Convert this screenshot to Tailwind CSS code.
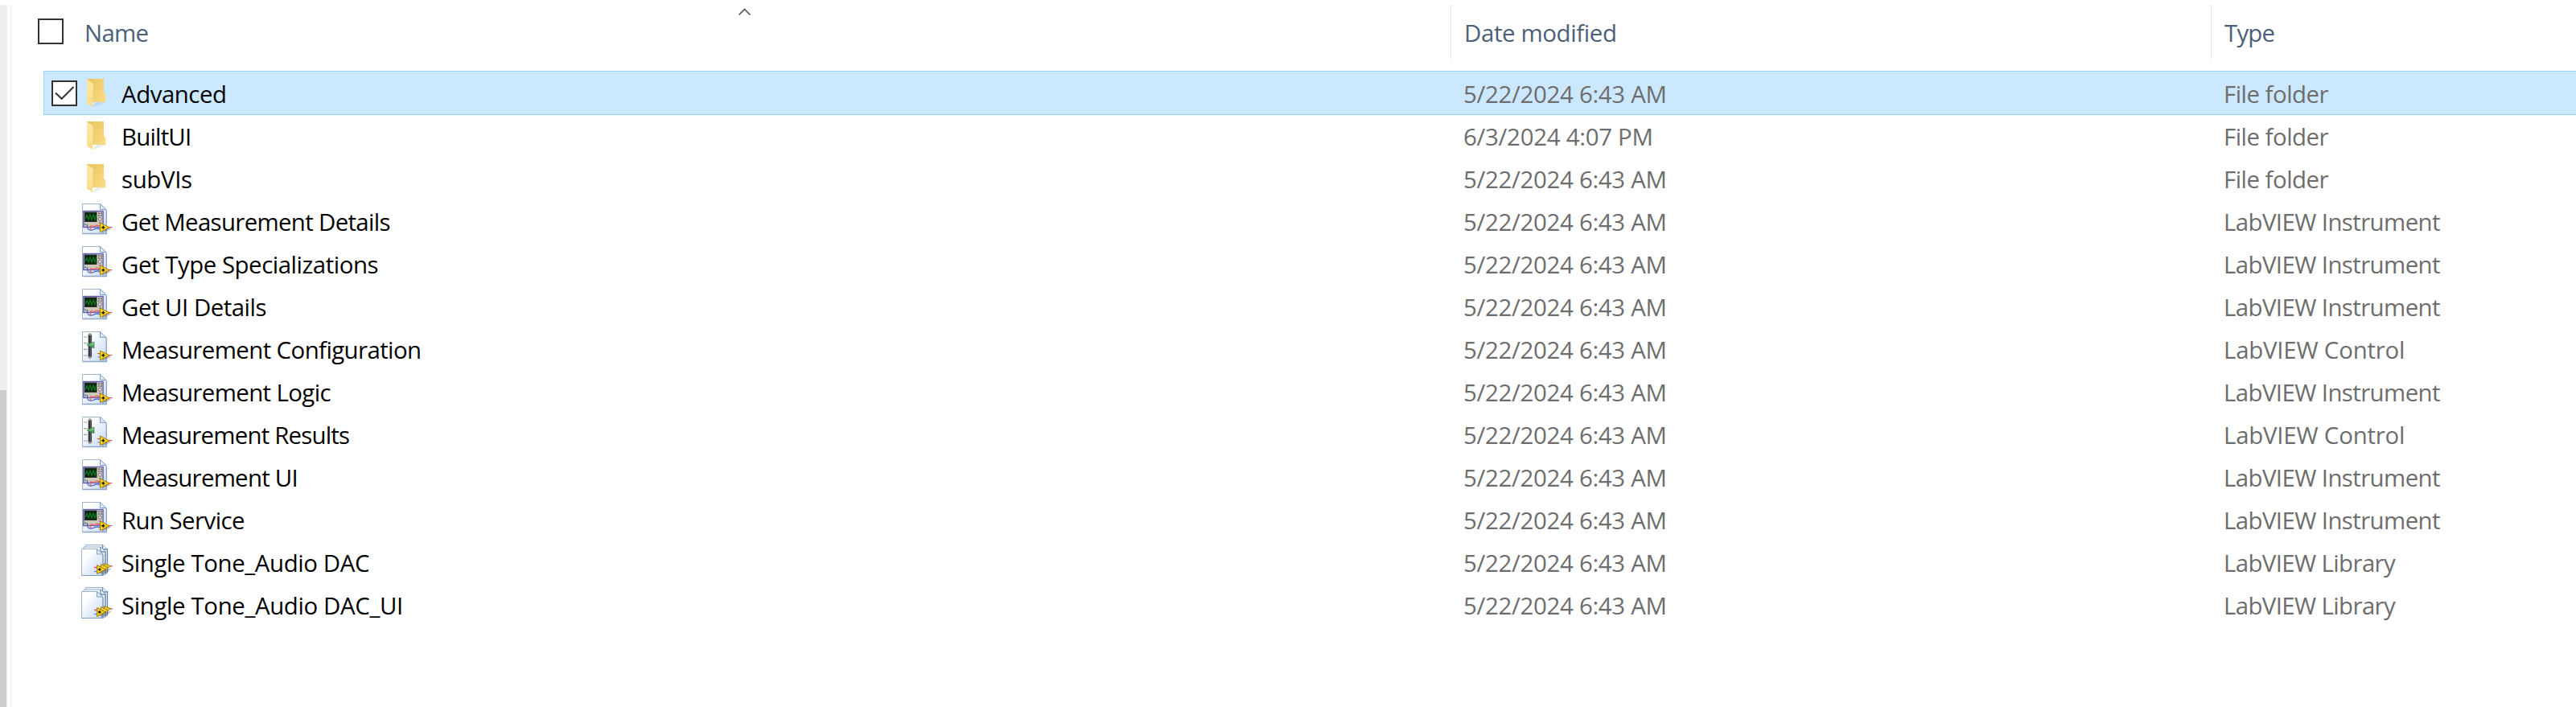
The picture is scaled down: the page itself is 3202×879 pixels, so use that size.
<!DOCTYPE html>
<html lang="en">
<head>
<meta charset="utf-8">
<title>Files</title>
<script src="https://cdn.jsdelivr.net/npm/@tailwindcss/browser@4"></script>
</head>
<body class="bg-white">
<svg width="0" height="0" class="absolute">
  <defs>
    <linearGradient id="paper" x1="0" y1="0" x2="1" y2="1"><stop offset=".25" stop-color="#fff"/><stop offset="1" stop-color="#c3d7f3"/></linearGradient>
    <linearGradient id="fBack" x1="0" y1="0" x2="1" y2="1"><stop offset="0" stop-color="#e9c35c"/><stop offset="1" stop-color="#fbdd85"/></linearGradient>
    <linearGradient id="fFront" x1="0" y1="0" x2="0" y2="1"><stop offset="0" stop-color="#ffe9a6"/><stop offset="1" stop-color="#fbdc84"/></linearGradient>
    <linearGradient id="green" x1="0" y1="0" x2="0" y2="1"><stop offset="0" stop-color="#9be0a0"/><stop offset="1" stop-color="#218a35"/></linearGradient>
    <symbol id="folder" viewBox="0 0 40 53">
      <path d="M15 44.200L33 37.500H20z" fill="#777" opacity=".15"/>
      <path d="M8 9H29V27L31.300 29V38H15L8 36z" fill="url(#fBack)"/>
      <path d="M8 9.500L16 15V37.500H15V44L8 39.500z" fill="url(#fFront)"/>
      <path d="M16 15V37.500" stroke="#e8c76c" stroke-width=".6"/>
    </symbol>
    <symbol id="sheet" viewBox="0 0 40 53">
      <path d="M2.500 5.500H24.500L32.500 13.500V42.500H2.500z" fill="url(#paper)" stroke="#a3b6cf"/>
      <path d="M32.300 13V42.500M2.500 42.500H33" stroke="#8fa8c6" stroke-width="1.300"/>
      <path d="M24.500 5.500V12.500H32L24.500 5.500z" fill="#dce9fa" stroke="#7f9fc4"/>
    </symbol>
    <symbol id="arrow" viewBox="0 0 40 53">
      <path d="M26 31L38 36.500L27 42z" fill="#555" opacity=".4"/>
      <path d="M21 32.700H25M35 34.700H39.300" stroke="#f0504a" stroke-width="1.300"/>
      <path d="M21.500 36.800H25" stroke="#6b8fd6" stroke-width="1.200"/>
      <path d="M24.500 29L36 34.800L24.500 40.600z" fill="#fbd51a" stroke="#a17c14"/>
      <path d="M26.300 34.800H30.300M28.300 32.800V36.800" stroke="#1c1604" stroke-width="1.400"/>
    </symbol>
    <symbol id="vi" viewBox="0 0 40 53">
      <use href="#sheet"/>
      <rect x="3.800" y="14.500" width="24.300" height="20" fill="#cdc8ba" stroke="#6560b8" stroke-width="1.400"/>
      <rect x="5.300" y="16" width="14.700" height="11.500" fill="#07230d" stroke="#333"/>
      <path d="M6.200 24L8 19.500L10 25L12 19L14 25L16 19L18 25L19.200 19" fill="none" stroke="#117c22" stroke-width="1.200"/>
      <path d="M22 17.200h2m1 0h2M22 19.900h2m1 0h2" stroke="#666" stroke-width="1.500"/>
      <circle cx="24.300" cy="24.300" r="2" fill="#e6e2d9" stroke="#777"/>
      <circle cx="24.300" cy="29" r="1.400" fill="#999"/>
      <path d="M5 31.200h2.200" stroke="#4aa34e" stroke-width="1.500"/>
      <path d="M8.500 31V34C9 39.500 15 38.500 17.500 36.800S22 36.500 25 36.500" fill="none" stroke="#4265c5" stroke-width="1.200"/>
      <path d="M13.500 37.500C10 35 13 31.500 15 33.300C17 35.500 18 31.800 20.500 32.200L25 33" fill="none" stroke="#ee5c5c" stroke-width="1.200"/>
      <use href="#arrow"/>
    </symbol>
    <symbol id="ctl" viewBox="0 0 40 53">
      <use href="#sheet"/>
      <path d="M4 12H8.500M4 19.700H8.500M4 27.300H8.500M4 35H8.500" stroke="#a4a4a4" stroke-width="1.200"/>
      <path d="M11.800 6.800L15 9.800H8.600zM11.800 39.500L15 36.500H8.600z" fill="#929292"/>
      <rect x="9.700" y="9.800" width="4.400" height="26.600" fill="#373b3e"/>
      <path d="M12.800 10V36" stroke="#777" stroke-width=".8"/>
      <path d="M8 21.800L17 18V25.800z" fill="url(#green)" stroke="#36764a" stroke-width=".7"/>
      <use href="#arrow"/>
    </symbol>
    <symbol id="lib" viewBox="0 0 40 53">
      <path d="M6.500 5.500H28L33.500 11V40.500H6.500z" fill="#edf3fc" stroke="#9cb0ca"/>
      <path d="M27.500 5.500V11H33.500V40" fill="none" stroke="#6b8bb2" stroke-width="1.300"/>
      <path d="M4 8H25L31 14V42.500H4z" fill="#f2f6fd" stroke="#9cb0ca"/>
      <path d="M25 8V14H31V42" fill="none" stroke="#6b8bb2" stroke-width="1.300"/>
      <path d="M1.500 10.500H20.500L28 17.500V43.500H1.500z" fill="url(#paper)" stroke="#9db2cd"/>
      <path d="M28 17.500V43.500H1.500" fill="none" stroke="#7e9cc0" stroke-width="1.200"/>
      <path d="M20.500 10.500V17H28z" fill="#dce9fa" stroke="#7f9fc4"/>
      <path d="M24 39L39 34L34 39L26 43z" fill="#333" opacity=".35"/>
      <path d="M17 33.500H20.500M34 31.800H40" stroke="#ef4c4c" stroke-width="1.300"/>
      <path d="M17 38.500H20.500" stroke="#5f86cf" stroke-width="1.200"/>
      <path d="M29.500 28.500V37L37.500 31.700z" fill="#f6d01c" stroke="#947516" stroke-width=".9"/>
      <path d="M25.500 29.500V39L34.500 33.900z" fill="#f6d01c" stroke="#947516" stroke-width=".9"/>
      <path d="M20.700 30.500V41.500L31 36z" fill="#fbd51a" stroke="#947516"/>
      <path d="M22 36H25.600M23.800 34.200V37.800" stroke="#1c1604" stroke-width="1.300"/>
    </symbol>
  </defs>
</svg>

<div class="flex h-[879px] w-[3202px] overflow-hidden bg-white pt-[6px] font-['Open_Sans','Noto_Sans',sans-serif] text-[29.400px] leading-[54px] whitespace-nowrap">
  <div class="w-[9px] shrink-0 bg-[#efefef] pt-[479px]"><div class="h-full w-2 bg-[#cdcdcd]"></div></div>
  <div class="ml-[3px] w-[3px] shrink-0 bg-[#f6f6f6]"></div>
  <main class="min-w-0 flex-1">
    <header class="relative flex h-[67px] text-[#4c607a]">
      <div class="flex w-[1788px] pl-8">
        <div class="mt-[17px] size-8 border-2 border-[#333]"></div>
        <div class="ml-[26px] pt-[8px]"><span data-w="76.500">Name</span></div>
      </div>
      <div class="w-[945px] border-l border-[#e2e2e2] pt-[8px] pl-4"><span data-w="186">Date modified</span></div>
      <div class="flex-1 border-l border-[#e2e2e2] pt-[8px] pl-4"><span data-w="61.500">Type</span></div>
      <svg class="absolute top-[3px] left-[901px]" width="20" height="12" viewBox="0 0 20 12"><path d="M2.500 9.500L9.500 2.500L16.500 9.500" fill="none" stroke="#555" stroke-width="1.700"/></svg>
    </header>
    <div id="rows" class="mt-[15px] ml-[39px]"></div>
  </main>
</div>

<script>
const D = '5/22/2024 6:43 AM';
const types = {
  folder: ['File folder', 128.5],
  vi: ['LabVIEW Instrument', 267],
  ctl: ['LabVIEW Control', 221],
  lib: ['LabVIEW Library', 212]
};
// icon, name, name width in px, date, date width in px
const files = [
  ['folder', 'Advanced', 129, D, 249.5],
  ['folder', 'BuiltUI', 83, '6/3/2024 4:07 PM', 232.5],
  ['folder', 'subVIs', 86, D, 249.5],
  ['vi', 'Get Measurement Details', 332.5, D, 249.5],
  ['vi', 'Get Type Specializations', 317.5, D, 249.5],
  ['vi', 'Get UI Details', 178.5, D, 249.5],
  ['ctl', 'Measurement Configuration', 369, D, 249.5],
  ['vi', 'Measurement Logic', 258.5, D, 249.5],
  ['ctl', 'Measurement Results', 281, D, 249.5],
  ['vi', 'Measurement UI', 215.5, D, 249.5],
  ['vi', 'Run Service', 150, D, 249.5],
  ['lib', 'Single Tone_Audio DAC', 307, D, 249.5],
  ['lib', 'Single Tone_Audio DAC_UI', 347, D, 249.5]
];
const check = `<svg class="mt-[11px] bg-white" width="32" height="32" viewBox="0 0 32 32"><rect x="1" y="1" width="30" height="30" fill="none" stroke="#333" stroke-width="2"/><path d="M5 15.500L12.700 22.800L27.500 8" fill="none" stroke="#333" stroke-width="2"/></svg>`;
document.getElementById('rows').innerHTML = files.map(([icon, name, w, date, dw], i) => `
  <div class="flex ${i ? 'h-[53px] pl-px' : 'h-[55px] border border-r-0 border-[#99d1ff] bg-[#cce8ff]'} ${i === 1 ? '-mt-px' : ''}">
    <div class="w-[36px] shrink-0 pl-[9px]">${i ? '' : check}</div>
    <svg class="ml-[9px] shrink-0" width="40" height="53" viewBox="0 0 40 53"><use href="#${icon}"/></svg>
    <div class="w-[1669px] shrink-0 pl-[11px] pt-px text-black"><span data-w="${w}">${name}</span></div>
    <div class="w-[945px] shrink-0 pl-[10px] pt-px text-[#6d6d6d]"><span data-w="${dw}">${date}</span></div>
    <div class="pl-[10px] pt-px text-[#6d6d6d]"><span data-w="${types[icon][1]}">${types[icon][0]}</span></div>
  </div>`).join('');

const ctx = document.createElement('canvas').getContext('2d');
ctx.font = '29.4px "Open Sans", "Noto Sans", sans-serif';
document.querySelectorAll('[data-w]').forEach(el => {
  const m = ctx.measureText(el.textContent);
  const ink = m.actualBoundingBoxLeft + m.actualBoundingBoxRight;
  el.style.letterSpacing = ((el.dataset.w - ink) / (el.textContent.length - 1)).toFixed(3) + 'px';
});
</script>
</body>
</html>
